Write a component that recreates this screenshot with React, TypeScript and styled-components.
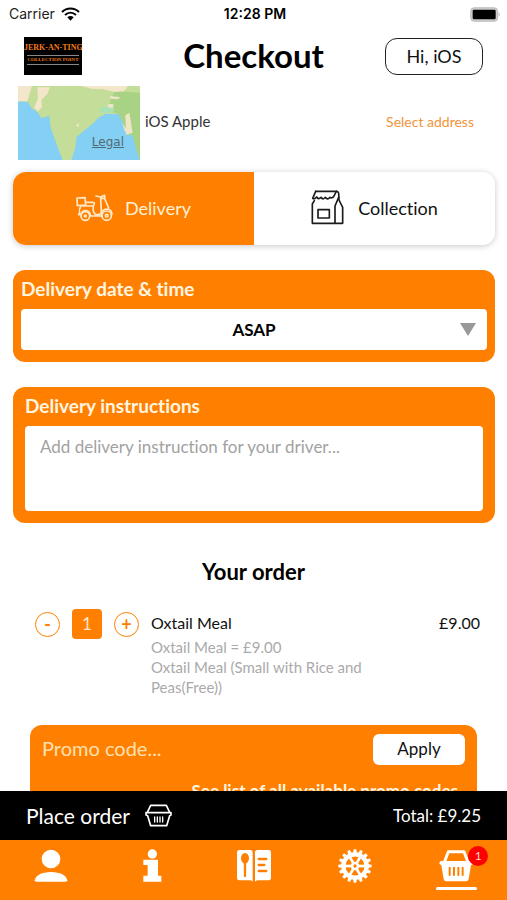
import React from "react";
import styled, { createGlobalStyle } from "styled-components";

const orange = "#ff8000";

const GlobalStyle = createGlobalStyle`
  *, *::before, *::after { box-sizing: border-box; }
  body { margin: 0; background: #fff; }
  button, input, select, textarea { font: inherit; color: inherit; }
  button { cursor: pointer; }
  svg { display: block; flex: none; }
`;

const Screen = styled.div`
  height: 100vh;
  display: flex;
  flex-direction: column;
  background: #fff;
  color: #111;
  font-family: Lato, "Noto Sans", sans-serif;
  font-size: 17px;
  font-variant-ligatures: none;
`;

const StatusBar = styled.div`
  display: grid;
  grid-template-columns: 1fr auto 1fr;
  align-items: center;
  height: 28px;
  padding: 0 6px 0 9px;
  font: 14px/20px Inter, sans-serif;
  color: #222;
`;
const Carrier = styled.span`
  display: flex;
  align-items: center;
  gap: 6px;
`;
const Clock = styled.span`
  font-weight: 600;
  color: #000;
`;
const BatterySlot = styled.span`
  justify-self: end;
`;

const Header = styled.header`
  display: grid;
  grid-template-columns: 1fr auto 1fr;
  align-items: center;
  height: 56px;
  padding: 0 24px;
`;
const Logo = styled.div`
  width: 58px;
  height: 38px;
  padding-top: 6px;
  background: #000;
  color: #f47b1c;
  font-family: "Liberation Serif", serif;
  font-weight: 700;
  text-align: center;
  white-space: nowrap;
`;
const LogoName = styled.div`
  font-size: 8px;
  line-height: 10px;
`;
const LogoTag = styled.div`
  margin: 2px 3px 0;
  border-top: 1px solid #888;
  border-bottom: 1px solid #888;
  font-size: 5px;
  line-height: 8px;
`;
const Title = styled.h1`
  margin: 0;
  padding-bottom: 2px;
  font-size: 33px;
  line-height: 40px;
  color: #000;
`;
const Greeting = styled.button`
  justify-self: end;
  width: 98px;
  height: 37px;
  border: 1px solid #222;
  border-radius: 12px;
  background: #fff;
  font-size: 18px;
`;

const Content = styled.main`
  flex: 1;
  min-height: 0;
  overflow: hidden;
`;

const AddressRow = styled.section`
  display: flex;
  align-items: center;
  gap: 5px;
  padding: 2px 33px 0 18px;
`;
const MapBox = styled.div`
  position: relative;
  width: 122px;
  height: 74px;
`;
const Legal = styled.a`
  position: absolute;
  right: 16px;
  bottom: 11px;
  color: #4f6a72;
  font: 12px/14px "DejaVu Sans", sans-serif;
`;
const Customer = styled.span`
  flex: 1;
  padding-bottom: 4px;
  font-size: 15px;
  color: #333;
`;
const SelectAddress = styled.button`
  border: 0;
  padding: 0 0 4px;
  background: none;
  color: #f0943a;
  font-size: 14px;
`;

const MethodSwitch = styled.div`
  display: flex;
  height: 73px;
  margin: 12px 12px 25px 13px;
  border-radius: 13px;
  overflow: hidden;
  box-shadow: 0 1px 6px rgba(0, 0, 0, 0.22);
`;
const Method = styled.button<{ $active?: boolean }>`
  flex: 1;
  display: flex;
  align-items: center;
  justify-content: center;
  gap: ${(p) => (p.$active ? 12 : 14)}px;
  padding: 0 0 2px;
  border: 0;
  background: ${(p) => (p.$active ? orange : "#fff")};
  color: ${(p) => (p.$active ? "#fff0d8" : "#111")};
  font-size: 18px;
`;

const Card = styled.section<{ $inset: number }>`
  margin: 0 12px 25px 13px;
  padding: 7px ${(p) => p.$inset}px 12px;
  border-radius: 12px;
  background: ${orange};
`;
const CardLabel = styled.label`
  display: block;
  margin-bottom: 8px;
  color: #fff5e0;
  font-size: 19px;
  font-weight: 700;
  line-height: 24px;
`;
const SelectWrap = styled.div`
  display: grid;
  align-items: center;
  border-radius: 4px;
  background: #fff;
  > * { grid-area: 1 / 1; }
  > svg { justify-self: end; margin-right: 11px; pointer-events: none; }
`;
const TimeSelect = styled.select`
  appearance: none;
  width: 100%;
  height: 41px;
  border: 0;
  border-radius: 4px;
  background: transparent;
  color: #000;
  font-size: 17px;
  font-weight: 700;
  text-align: center;
  text-align-last: center;
`;
const Instructions = styled.textarea`
  display: block;
  width: 100%;
  height: 85px;
  padding: 10px 15px;
  border: 0;
  border-radius: 4px;
  background: #fff;
  resize: none;
  font-size: 17px;
  line-height: 22px;
  &::placeholder { color: #a2a2a2; opacity: 1; }
`;

const OrderTitle = styled.h2`
  margin: 36px 0 24px;
  color: #000;
  font-size: 22px;
  line-height: 26px;
  text-align: center;
`;
const OrderItem = styled.article`
  display: flex;
  align-items: flex-start;
  gap: 12px;
  padding: 0 27px 0 35px;
`;
const Stepper = styled.div`
  display: flex;
  align-items: center;
  gap: 12px;
`;
const StepButton = styled.button`
  width: 25px;
  height: 25px;
  padding: 0;
  border: 1px solid ${orange};
  border-radius: 50%;
  background: #fff;
  color: ${orange};
  font-size: 18px;
  font-weight: 700;
  line-height: 20px;
`;
const Quantity = styled.output`
  width: 30px;
  height: 30px;
  border-radius: 4px;
  background: ${orange};
  color: #ffe6c4;
  line-height: 30px;
  text-align: center;
`;
const ItemText = styled.div`
  flex: 1;
`;
const ItemName = styled.h3`
  margin: 0;
  font-size: 16px;
  font-weight: 400;
  line-height: 28px;
`;
const ItemDetail = styled.p`
  max-width: 230px;
  margin: 0;
  color: #aaa;
  font-size: 15px;
  line-height: 20px;
`;
const Price = styled.span`
  font-size: 16px;
  line-height: 28px;
`;

const Promo = styled.section`
  margin: 28px 30px 0;
  padding: 9px 12px 12px;
  border-radius: 12px;
  background: ${orange};
`;
const PromoRow = styled.div`
  display: flex;
  align-items: center;
`;
const PromoInput = styled.input`
  flex: 1;
  min-width: 0;
  padding: 0 0 4px;
  border: 0;
  background: none;
  color: #fff;
  font-size: 20px;
  line-height: 24px;
  &::placeholder { color: #ffe0b0; opacity: 1; }
`;
const Apply = styled.button`
  width: 92px;
  height: 31px;
  padding: 0 0 2px;
  border: 0;
  border-radius: 6px;
  background: #fff;
  font-size: 17px;
`;
const PromoLink = styled.a`
  display: block;
  margin: 16px 7px 0 0;
  color: #fff5e0;
  font-size: 17px;
  font-weight: 700;
  line-height: 20px;
  text-align: right;
  text-decoration: none;
`;

const OrderBar = styled.div`
  display: flex;
  align-items: center;
  justify-content: space-between;
  height: 49px;
  padding: 0 26px;
  background: #000;
  color: #fff;
`;
const PlaceOrder = styled.button`
  display: flex;
  align-items: center;
  gap: 15px;
  padding: 0;
  border: 0;
  background: none;
  font-size: 21px;
`;
const Total = styled.span`
  font-size: 17px;
`;

const Tabs = styled.nav`
  display: flex;
  height: 60px;
  background: ${orange};
`;
const Tab = styled.a`
  flex: 1;
  display: flex;
  flex-direction: column;
  align-items: center;
  padding-top: 9px;
`;
const TabIcon = styled.span`
  position: relative;
`;
const Badge = styled.span`
  position: absolute;
  top: -3px;
  right: -15px;
  width: 20px;
  height: 20px;
  border-radius: 50%;
  background: #f00;
  color: #ffd9d0;
  font-size: 12px;
  line-height: 20px;
  text-align: center;
`;
const ActiveMark = styled.span`
  width: 41px;
  height: 3px;
  margin-top: 4px;
  border-radius: 2px;
  background: #fff;
`;

const Wifi = () => (
  <svg width="19" height="14" viewBox="0 0 57 42" fill="none" stroke="#000" strokeWidth="6">
    <path d="M3 15C17 1 40 1 54 15" />
    <path d="M12 24C22 15 35 15 45 24" />
    <path d="M19 31C25 26 32 26 38 31L28.500 41Z" fill="#000" stroke="none" />
  </svg>
);

const Battery = () => (
  <svg width="31" height="15" viewBox="0 0 93 45">
    <rect x="2" y="2" width="81" height="41" rx="11" fill="#ccc" stroke="#aaa" strokeWidth="2" />
    <rect x="8" y="8" width="69" height="29" rx="4" />
    <path d="M86 15q6 7 0 14z" fill="#aaa" />
  </svg>
);

const MapPicture = () => (
  <svg width="100%" height="100%" viewBox="0 0 366 222" preserveAspectRatio="none">
    <rect width="366" height="222" fill="#84d0f4" />
    <path d="M0 0H366V222L352 180 345 148 328 146 315 110 302 84 280 84 262 84 240 96 226 112 176 152 172 186 160 222H134L118 180 98 125 94 90 70 96 58 78 40 66 30 48 0 46Z" fill="#c4dd98" />
    <path d="M290 15L366 20V222L352 180 345 148 328 146 315 110 302 84 272 76 278 40Z" fill="#a9d384" />
    <path d="M0 0H42L28 46 0 46ZM58 4H96L88 24 70 42 72 64 60 76 48 66 60 38ZM190 0H330L318 16 290 18 256 10 220 8Z" fill="#f3e6cb" />
    <path d="M276 30L308 34 300 40 278 38ZM270 54H286V66H270ZM172 118L184 112 182 124ZM322 88L334 80 344 140 324 146ZM312 112L324 128 322 140Z" fill="#eee5c6" />
    <path d="M246 66Q266 58 290 70L284 80 248 82Z" fill="#a9e2b4" />
  </svg>
);

const Scooter = () => (
  <svg width="37" height="28" viewBox="0 0 111 84" fill="none" stroke="#ffe9c8" strokeWidth="5" strokeLinejoin="round" strokeLinecap="round">
    <path d="M3 12L27 11 29 33 4 35ZM31 25H49Q56 25 55 30L52 36H20" />
    <path d="M14 38Q8 46 11 56L8 62H14M52 37Q49 56 60 62H68Q77 60 76 50L74 14M16 60Q20 48 31 50 42 52 44 66H76" />
    <path d="M60 6L74 9 86 4V13H76M86 14L98 42" />
    <path d="M76 66Q76 45 93 45 106 46 108 60" />
    <circle cx="28" cy="66" r="13" />
    <circle cx="28" cy="66" r="3" />
    <circle cx="92" cy="65" r="14" />
    <circle cx="92" cy="65" r="4" />
  </svg>
);

const Bag = () => (
  <svg width="33" height="35" viewBox="0 0 99 105" fill="none" stroke="#1c1c1c" strokeWidth="5" strokeLinejoin="round" strokeLinecap="round">
    <path d="M14 4H78Q82 5 83 10L84 30 95 52V100H4V42L10 32" />
    <path d="M14 4L5 25Q11 29 17 21 22 30 30 22 36 31 43 22 49 31 57 22 63 27 69 18L76 4" />
    <path d="M83 22L72 48V100" />
    <rect x="21" y="59" width="34" height="25" />
  </svg>
);

const BasketOutline = () => (
  <svg width="27" height="23" viewBox="0 0 81 69" fill="none" stroke="#fff" strokeWidth="5" strokeLinejoin="round" strokeLinecap="round">
    <path d="M7 25L17 4H64L74 25M3 26H78V33L74 35 65 65H17L8 35 3 33Z" />
    <path d="M29 39V54M37 39V54M45 39V54M53 39V54" strokeWidth="4" />
  </svg>
);

const Person = () => (
  <svg width="34" height="34" viewBox="0 0 102 102" fill="#fff">
    <circle cx="51" cy="30" r="28" />
    <path d="M2 94Q8 70 51 69 94 70 100 94 100 98 94 98H8Q2 98 2 94Z" />
  </svg>
);

const Info = () => (
  <svg width="34" height="34" viewBox="0 0 102 102" fill="#fff">
    <circle cx="52" cy="15" r="14" />
    <path d="M25 32H69V80H79V98H25V80H38V48H25Z" />
  </svg>
);

const MenuBook = () => (
  <svg width="34" height="34" viewBox="0 0 102 102">
    <path d="M7 3H40Q47 3 47 10V98Q44 94 38 94H7Q0 94 0 87V10Q0 3 7 3Z" fill="#fff" />
    <path d="M62 3H95Q102 3 102 10V87Q102 94 95 94H64Q58 94 54 98V10Q54 3 62 3Z" fill="#fff" />
    <ellipse cx="24" cy="28" rx="12" ry="16" fill={orange} />
    <path d="M24 38V81" stroke={orange} strokeWidth="7" strokeLinecap="round" />
    <path d="M65 30H88M65 48H82M65 66H88" stroke={orange} strokeWidth="7" strokeLinecap="round" />
  </svg>
);

const teeth = Array.from({ length: 16 }, (_, i) => i * 22.5);
const spokes = [30, 90, 150, 210, 270, 330];

const Cog = () => (
  <svg width="34" height="34" viewBox="0 0 102 102" fill="none" stroke="#fff">
    <circle cx="51" cy="51" r="35" strokeWidth="13" />
    {teeth.map((a) => (
      <path key={a} d="M45 14L47 1H55L57 14Z" fill="#fff" stroke="none" transform={`rotate(${a} 51 51)`} />
    ))}
    {spokes.map((a) => (
      <path key={a} d="M51 40V18" strokeWidth="8" transform={`rotate(${a} 51 51)`} />
    ))}
    <circle cx="51" cy="51" r="9" strokeWidth="8" />
  </svg>
);

const BasketSolid = () => (
  <svg width="34" height="34" viewBox="0 0 102 102">
    <path d="M16 40L28 8H75L87 40" fill="none" stroke="#fff" strokeWidth="9" strokeLinejoin="round" />
    <path d="M5 36H98Q103 38 101 46L96 49 89 90Q88 97 81 97H22Q15 97 14 90L7 49 2 46Q0 38 5 36Z" fill="#fff" />
    <path d="M32 56V78M45 56V78M58 56V78M71 56V78" stroke={orange} strokeWidth="6" strokeLinecap="round" />
  </svg>
);

export default function App() {
  return (
    <Screen>
      <GlobalStyle />
      <StatusBar>
        <Carrier>Carrier <Wifi /></Carrier>
        <Clock>12:28 PM</Clock>
        <BatterySlot><Battery /></BatterySlot>
      </StatusBar>
      <Header>
        <Logo>
          <LogoName>JERK-AN-TING</LogoName>
          <LogoTag>COLLECTION POINT</LogoTag>
        </Logo>
        <Title>Checkout</Title>
        <Greeting type="button">Hi, iOS</Greeting>
      </Header>
      <Content>
        <AddressRow>
          <MapBox>
            <MapPicture />
            <Legal href="#legal">Legal</Legal>
          </MapBox>
          <Customer>iOS Apple</Customer>
          <SelectAddress type="button">Select address</SelectAddress>
        </AddressRow>
        <MethodSwitch>
          <Method type="button" $active aria-pressed="true"><Scooter />Delivery</Method>
          <Method type="button" aria-pressed="false"><Bag />Collection</Method>
        </MethodSwitch>
        <Card $inset={8}>
          <CardLabel htmlFor="time">Delivery date &amp; time</CardLabel>
          <SelectWrap>
            <TimeSelect id="time"><option>ASAP</option></TimeSelect>
            <svg width="16" height="13" viewBox="0 0 16 13"><path d="M0 0H16L8 13Z" fill="#999" /></svg>
          </SelectWrap>
        </Card>
        <Card $inset={12}>
          <CardLabel htmlFor="instructions">Delivery instructions</CardLabel>
          <Instructions id="instructions" placeholder="Add delivery instruction for your driver..." />
        </Card>
        <OrderTitle>Your order</OrderTitle>
        <OrderItem>
          <Stepper>
            <StepButton type="button" aria-label="Remove one">-</StepButton>
            <Quantity>1</Quantity>
            <StepButton type="button" aria-label="Add one">+</StepButton>
          </Stepper>
          <ItemText>
            <ItemName>Oxtail Meal</ItemName>
            <ItemDetail>Oxtail Meal = £9.00</ItemDetail>
            <ItemDetail>Oxtail Meal (Small with Rice and Peas(Free))</ItemDetail>
          </ItemText>
          <Price>£9.00</Price>
        </OrderItem>
        <Promo>
          <PromoRow>
            <PromoInput aria-label="Promo code" placeholder="Promo code..." />
            <Apply type="button">Apply</Apply>
          </PromoRow>
          <PromoLink href="#promos">See list of all available promo codes</PromoLink>
        </Promo>
      </Content>
      <OrderBar>
        <PlaceOrder type="button">Place order <BasketOutline /></PlaceOrder>
        <Total>Total: £9.25</Total>
      </OrderBar>
      <Tabs>
        <Tab href="#account" aria-label="Account"><Person /></Tab>
        <Tab href="#info" aria-label="Information"><Info /></Tab>
        <Tab href="#menu" aria-label="Menu"><MenuBook /></Tab>
        <Tab href="#settings" aria-label="Settings"><Cog /></Tab>
        <Tab href="#basket" aria-label="Basket">
          <TabIcon><BasketSolid /><Badge>1</Badge></TabIcon>
          <ActiveMark />
        </Tab>
      </Tabs>
    </Screen>
  );
}
